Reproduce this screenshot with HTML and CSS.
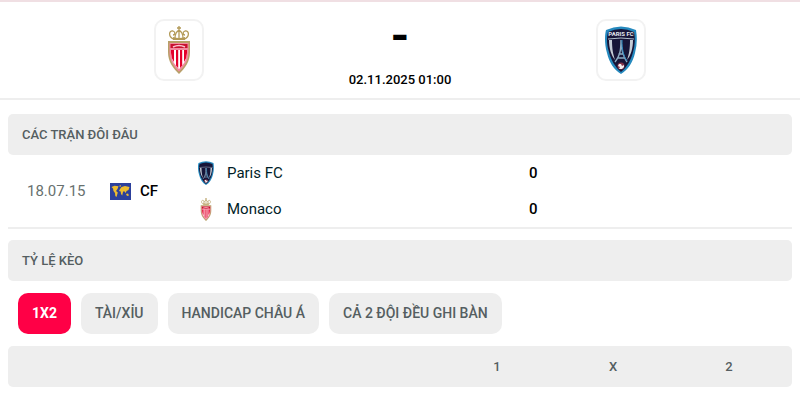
FILE: index.html
```html
<!DOCTYPE html>
<html lang="vi">
<head>
    <meta charset="UTF-8">
    <meta name="viewport" content="width=device-width, initial-scale=1.0">
    <title>Monaco - Paris FC</title>
    <link rel="stylesheet" href="styles.css">
</head>
<body>

    <!-- Match Header -->
    <header class="match-header">
        <a href="#" class="team-logo" aria-label="Monaco">
            <svg class="crest-monaco" viewBox="0 0 24 48">
                <g id="monaco">
                    <g fill="none" stroke="#b39a58" stroke-width="1.3">
                        <path d="M6 13C1 10 2 4 6 5c3 1 2 4 0 4M18 13c5-3 4-9 0-8-3 1-2 4 0 4"/>
                        <path d="M8 12c0-4 1-6 4-8 3 2 4 4 4 8M12 0v12M10 2h4"/>
                    </g>
                    <path d="M6 11q6 2 12 0v3H6z" fill="#b39a58"/>
                    <path d="M1 15h22v11c0 10-5 16-11 22C6 42 1 36 1 26z" fill="#b8a069"/>
                    <path d="M2.500 17h19v9c0 9-4 14-9.500 19.500C6.500 40 2.500 35 2.500 26z" fill="#f28aa0"/>
                    <path d="M3.500 18h17v4h-17z" fill="#c8102e"/>
                    <path d="M6 21q6-3 12 0" fill="none" stroke="#f9c4ce" stroke-width="1.500"/>
                    <path d="M4 24h16v3c0 7-4 12-8 16-4-4-8-9-8-16z" fill="#fff"/>
                    <path d="M4 24h3v12q-3-4-3-9zM9 24h2.200v18L9 39.500zM13 24h2.200v15.500L13 42zM17 24h3v3q0 5-3 9z" fill="#e4002b"/>
                </g>
            </svg>
        </a>
        <div class="match-info">
            <div class="score">-</div>
            <div class="start-time">02.11.2025 01:00</div>
        </div>
        <a href="#" class="team-logo" aria-label="Paris FC">
            <svg class="crest-paris" viewBox="0 0 32 48">
                <g id="paris">
                    <path d="M1 4Q16-3 31 4q2 12-1 23c-2 9-7 17-14 21C9 44 4 36 2 27-1 16 0 8 1 4z" fill="#2589be"/>
                    <path d="M3 6q13-6 26 0 2 10-1 20c-2 8-6 15-12 20C10 41 6 34 4 26 1 16 2 10 3 6z" fill="#171538"/>
                    <path d="M3 13q13-2 26 0" fill="none" stroke="#aebdca" stroke-width="1"/>
                    <path d="M4 14h3c0 9 1 14 3 20-4-5-6-12-6-20zM28 14h-3c0 9-1 14-3 20 4-5 6-12 6-20z" fill="#c5ccd6"/>
                    <path d="M16 14c0 10-1 16-6 22M16 14c0 10 2 16 6 22M13.500 28h5M12 32h8" fill="none" stroke="#8dabc2" stroke-width="1.400"/>
                    <path d="M17 14c0 9 1 15 5 21" fill="none" stroke="#2b86bd" stroke-width="1"/>
                    <circle cx="16" cy="40" r="3.500" fill="#843449"/>
                    <path d="M14 38h2l1 2 2-1v2l-2 2h-3l1-2-2-1z" fill="#f2eef2"/>
                </g>
                <text x="16" y="10" class="crest-text">PARIS FC</text>
            </svg>
        </a>
    </header>

    <main class="content">

        <!-- Head to Head -->
        <h2 class="section-title">CÁC TRẬN ĐÔI ĐÂU</h2>
        <div class="h2h-row">
            <span class="date">18.07.15</span>
            <div class="competition">
                <svg class="flag" viewBox="0 0 21 17" aria-hidden="true">
                    <path d="M0 0h21v17H0z" fill="#2c409c"/>
                    <path d="M1.500 4l3-1.200 4 .5L7.500 6 6 8l1.800 1.500L6.500 14l-1.200-1L5 10 3.500 8 3 5.500zM9 3l2-1-.5 2zM10 6l1.500-2L15 3l4.500 1-1 3-2 1-.8 2L14 8l-1 1-.8 3.500L11 11l-.3-2.500L9 8zM16 11l2-.5 1 2-2 .5z" fill="#eebc2e"/>
                </svg>
                <span>CF</span>
            </div>
            <div class="teams">
                <div class="team">
                    <span class="team-icon">
                        <svg class="icon-paris" viewBox="0 0 32 48" aria-hidden="true"><use href="#paris"/></svg>
                    </span>
                    <span class="team-name">Paris FC</span>
                    <span class="goals">0</span>
                </div>
                <div class="team">
                    <span class="team-icon">
                        <svg class="icon-monaco" viewBox="0 0 24 48" aria-hidden="true"><use href="#monaco"/></svg>
                    </span>
                    <span class="team-name">Monaco</span>
                    <span class="goals">0</span>
                </div>
            </div>
        </div>

        <!-- Odds -->
        <h2 class="section-title">TỶ LỆ KÈO</h2>
        <div class="tabs">
            <button type="button" class="tab active">1X2</button>
            <button type="button" class="tab">TÀI/XỈU</button>
            <button type="button" class="tab">HANDICAP CHÂU Á</button>
            <button type="button" class="tab">CẢ 2 ĐỘI ĐỀU GHI BÀN</button>
        </div>
        <table class="odds-table">
            <thead>
                <tr>
                    <td></td>
                    <th scope="col">1</th>
                    <th scope="col">X</th>
                    <th scope="col">2</th>
                    <td class="edge"></td>
                </tr>
            </thead>
        </table>
    </main>

</body>
</html>
```
FILE: styles.css
```css
* {
    box-sizing: border-box;
}

body {
    font-family: Roboto, "Liberation Sans", sans-serif;
    background-color: #fff;
    color: #001e28;
    margin: 0;
    border-top: 2px solid #f0dfe3;
}

/* Match Header */
.match-header {
    display: grid;
    grid-template-columns: repeat(3, 221px);
    justify-content: center;
    justify-items: center;
    padding: 17px 0 10px;
    border-bottom: 2px solid #eee;
}

.team-logo {
    display: flex;
    justify-content: center;
    align-items: center;
    width: 50px;
    height: 62px;
    border: 2px solid #f2f2f2;
    border-radius: 10px;
}

.crest-monaco {
    width: 24px;
    height: 48px;
}

.crest-paris {
    width: 32px;
    height: 48px;
}

.crest-text {
    font-size: 6px;
    font-weight: bold;
    fill: #e4e8ee;
    text-anchor: middle;
}

.match-info {
    text-align: center;
    color: #000;
}

.score {
    font-size: 48px;
    font-weight: bold;
    line-height: 34px;
}

.start-time {
    font-size: 13px;
    font-weight: 500;
    line-height: 16px;
    margin-top: 19px;
}

.content {
    padding: 14px 8px;
}

/* Section Titles */
.section-title {
    margin: 0;
    padding: 0 14px;
    background-color: #eee;
    border-radius: 5px;
    color: #555e61;
    font-size: 13px;
    font-weight: 500;
    line-height: 41px;
}

/* Head to Head Row */
.h2h-row {
    display: flex;
    align-items: center;
    padding-left: 19px;
    margin-bottom: 11px;
    border-bottom: 2px solid #eee;
    font-size: 15px;
}

.date {
    width: 83px;
    color: #68716f;
}

.competition {
    display: flex;
    align-items: center;
    gap: 9px;
    width: 86px;
    color: #000;
    font-weight: 500;
}

.flag {
    width: 21px;
    height: 17px;
}

.teams {
    flex: 1;
}

.team {
    display: flex;
    align-items: center;
    height: 36px;
}

.team-icon {
    display: flex;
    justify-content: center;
    width: 20px;
    margin-right: 11px;
}

.icon-paris {
    width: 16px;
    height: 24px;
}

.icon-monaco {
    width: 12px;
    height: 23px;
}

.team-name {
    flex: 1;
}

.goals {
    width: 263px;
    color: #000;
    font-weight: 500;
}

/* Odds Tabs */
.tabs {
    display: flex;
    flex-wrap: wrap;
    gap: 10px;
    padding: 12px 10px;
}

.tab {
    padding: 0 14px;
    border: none;
    border-radius: 10px;
    background-color: #eee;
    color: #555e61;
    font-family: inherit;
    font-size: 14px;
    font-weight: 500;
    line-height: 41px;
    cursor: pointer;
}

.tab.active {
    background-color: #ff0046;
    color: #fff;
    font-weight: bold;
}

/* Odds Table */
.odds-table {
    width: 100%;
    table-layout: fixed;
    border-spacing: 0;
    border-radius: 5px;
    background-color: #eee;
    color: #555e61;
    font-size: 13px;
    line-height: 41px;
}

.odds-table th,
.odds-table td {
    padding: 0;
}

.odds-table th {
    width: 116px;
    font-weight: 500;
}

.odds-table .edge {
    width: 5px;
}
```
